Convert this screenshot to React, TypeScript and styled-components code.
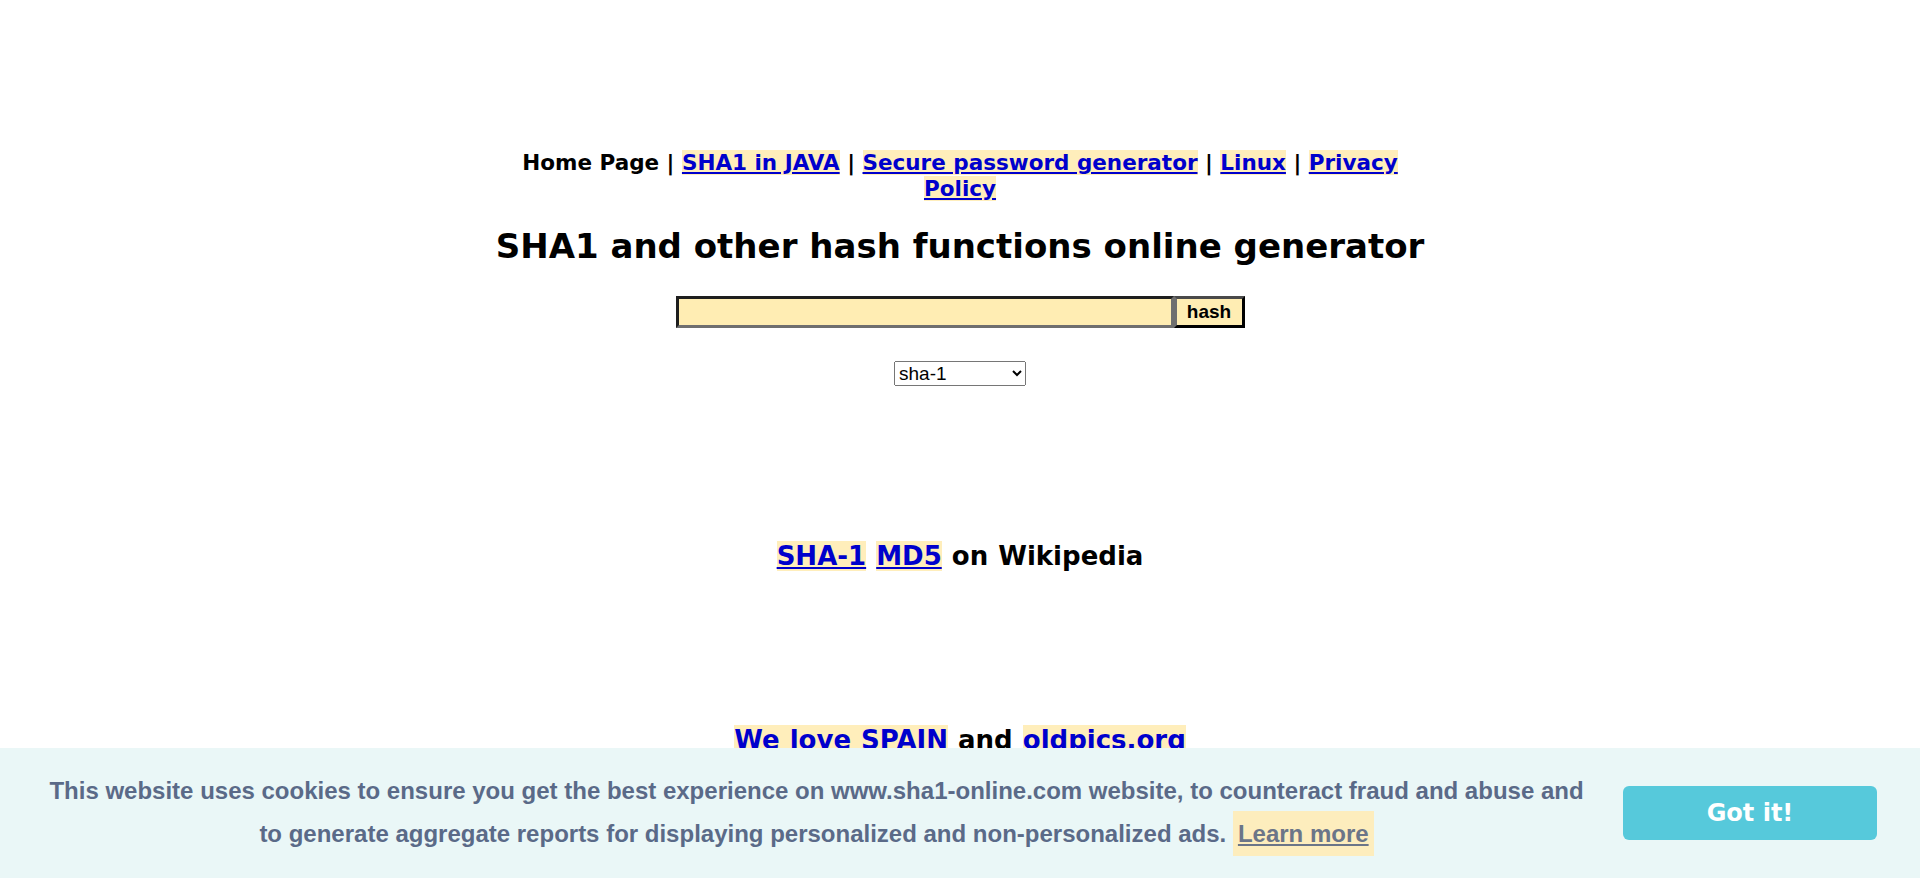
import { createGlobalStyle, styled } from 'styled-components';

const GlobalStyle = createGlobalStyle`
    html, body {
        margin: 0;
        padding: 0;
        background: #ffffff;
        font-family: 'DejaVu Sans', Verdana, sans-serif;
        color: #000000;
    }
`;

const Page = styled.div`
    display: flex;
    flex-direction: column;
    align-items: center;
    padding-top: 150px;
    padding-bottom: 200px;
`;

const Nav = styled.nav`
    width: 900px;
    text-align: center;
    font-size: 21.5px;
    font-weight: 700;
    line-height: 26px;
`;

const Link = styled.a`
    color: #0000cc;
    background: #ffeebb;
    text-decoration: underline;
`;

const Title = styled.h1`
    margin: 24px 0 0;
    font-size: 34px;
    line-height: 40px;
    font-weight: 700;
    text-align: center;
`;

const HashForm = styled.form`
    display: flex;
    margin-top: 30px;
`;

const HashInput = styled.input`
    box-sizing: border-box;
    width: 498px;
    height: 32px;
    background: #ffedb3;
    border-style: solid;
    border-width: 3px;
    border-color: #1e1e1e #6f6f6f #6f6f6f #1e1e1e;
    outline: none;
    padding: 0 4px;
    font-size: 18px;
`;

const HashButton = styled.button`
    box-sizing: border-box;
    width: 71px;
    height: 32px;
    background: #ffedb3;
    border-style: solid;
    border-width: 3px;
    border-color: #4a4a4a #000000 #000000 #6f6f6f;
    font-family: 'Liberation Sans', Arial, sans-serif;
    font-size: 19px;
    font-weight: 700;
    color: #000;
    padding: 0;
`;

const AlgoSelect = styled.select`
    margin-top: 33px;
    width: 132px;
    height: 25px;
    font-family: 'Liberation Sans', Arial, sans-serif;
    font-size: 19px;
`;

const InfoLine = styled.p<{ $gap: number }>`
    margin: ${({ $gap }) => $gap}px 0 0;
    font-size: 26px;
    font-weight: 700;
    line-height: 34px;
    text-align: center;
    word-spacing: 1px;
`;

const Banner = styled.div`
    position: fixed;
    left: 0;
    right: 0;
    bottom: 0;
    height: 130px;
    box-sizing: border-box;
    background: #eaf7f7;
    display: flex;
    align-items: center;
    padding: 0 43px 0 44px;
    gap: 34px;
`;

const BannerText = styled.span`
    flex: 1;
    text-align: center;
    font-family: 'Liberation Sans', Arial, sans-serif;
    font-size: 24px;
    font-weight: 700;
    line-height: 40px;
    color: #5a6a88;
`;

const LearnMore = styled.a`
    display: inline-block;
    padding: 2px 5px;
    line-height: 41px;
    background: #fdedbd;
    color: #6b7588;
    text-decoration: underline;
`;

const GotIt = styled.button`
    flex: none;
    width: 254px;
    height: 54px;
    border: none;
    border-radius: 6px;
    background: #56c9db;
    color: #ffffff;
    font-family: 'DejaVu Sans', Verdana, sans-serif;
    font-size: 24px;
    font-weight: 700;
`;

const App = () => {
    return (
        <>
            <GlobalStyle />
            <Page>
                <Nav>
                    Home Page | <Link href="#">SHA1 in JAVA</Link> | <Link href="#">Secure password generator</Link> |{' '}
                    <Link href="#">Linux</Link> | <Link href="#">Privacy Policy</Link>
                </Nav>
                <Title>SHA1 and other hash functions online generator</Title>
                <HashForm onSubmit={(e) => e.preventDefault()}>
                    <HashInput type="text" />
                    <HashButton type="submit">hash</HashButton>
                </HashForm>
                <AlgoSelect defaultValue="sha-1">
                    <option value="sha-1">sha-1</option>
                    <option value="sha-224">sha-224</option>
                    <option value="sha-256">sha-256</option>
                    <option value="md5">md5</option>
                </AlgoSelect>
                <InfoLine $gap={153}>
                    <Link href="#">SHA-1</Link> <Link href="#">MD5</Link> on Wikipedia
                </InfoLine>
                <InfoLine $gap={150}>
                    <Link href="#">We love SPAIN</Link> and <Link href="#">oldpics.org</Link>
                </InfoLine>
            </Page>
            <Banner>
                <BannerText>
                    This website uses cookies to ensure you get the best experience on www.sha1-online.com website, to
                    counteract fraud and abuse and to generate aggregate reports for displaying personalized and
                    non-personalized ads. <LearnMore href="#">Learn more</LearnMore>
                </BannerText>
                <GotIt type="button">Got it!</GotIt>
            </Banner>
        </>
    );
};

export default App;
